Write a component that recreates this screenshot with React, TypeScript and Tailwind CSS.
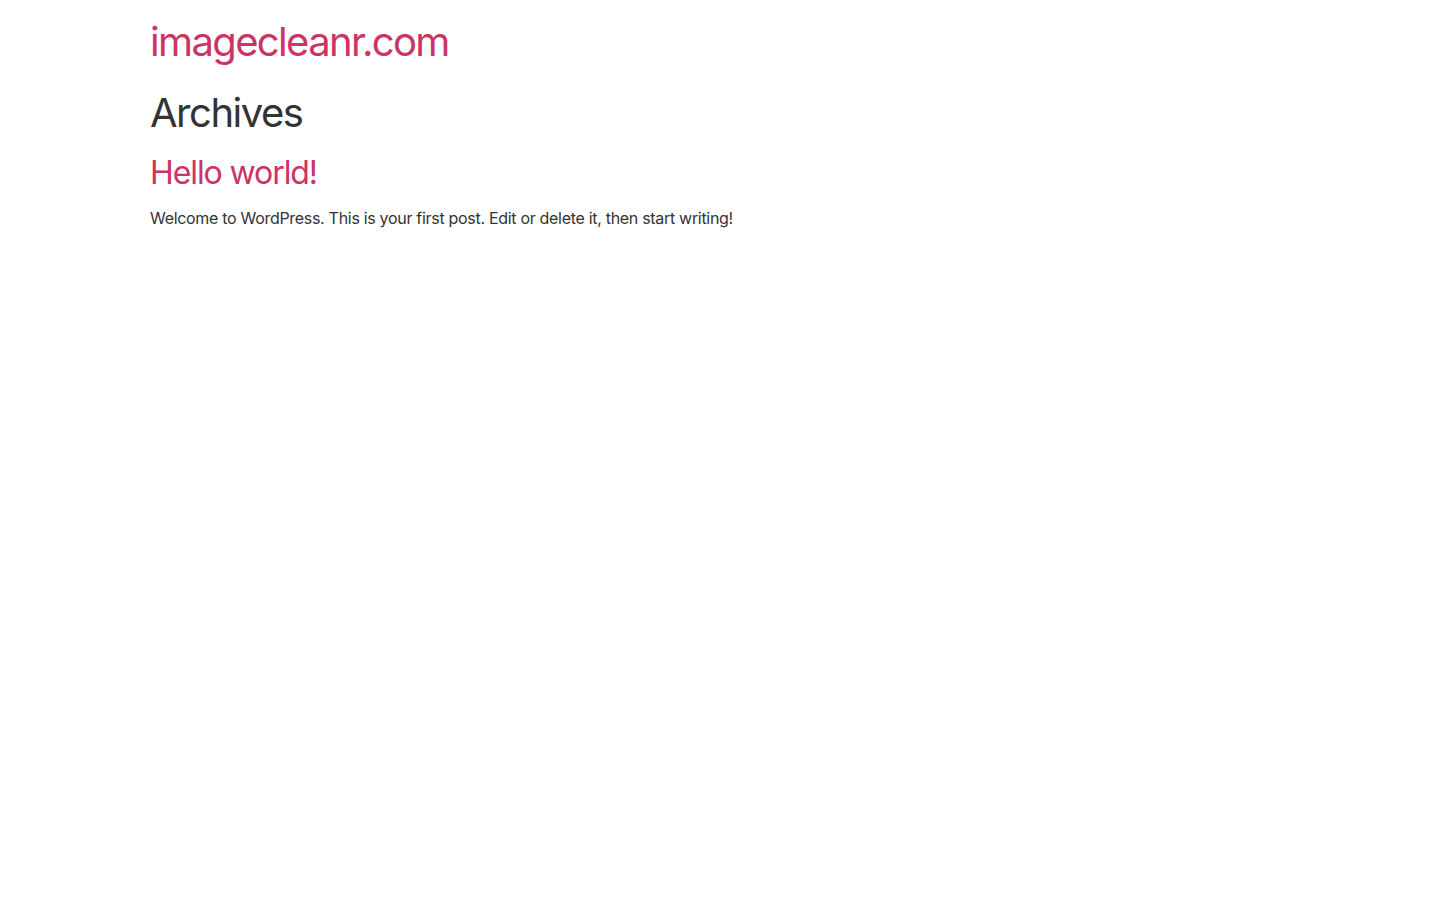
export default function App() {
  return (
    <div className="min-h-screen bg-white text-[#333333]" style={{ fontFamily: 'Inter, "Noto Sans", sans-serif' }}>
      <header className="mx-auto w-[1140px] pt-[18px] pb-[23px]">
        <h1 className="m-0 text-[40px] leading-[1.2] font-normal tracking-[-0.041em] text-[#cc3366]">imagecleanr.com</h1>
      </header>
      <main className="mx-auto w-[1140px]">
        <h1 className="m-0 text-[40px] leading-[1.2] font-normal tracking-[-0.037em] text-[#333333]">Archives</h1>
        <article className="mt-[17px]">
          <h2 className="m-0 text-[32px] leading-[1.2] font-normal tracking-[-0.034em] text-[#cc3366]">Hello world!</h2>
          <p className="mt-[14px] text-[16px] leading-[1.5] tracking-[-0.019em] text-[#333333]">
            Welcome to WordPress. This is your first post. Edit or delete it, then start writing!
          </p>
        </article>
      </main>
    </div>
  );
}
